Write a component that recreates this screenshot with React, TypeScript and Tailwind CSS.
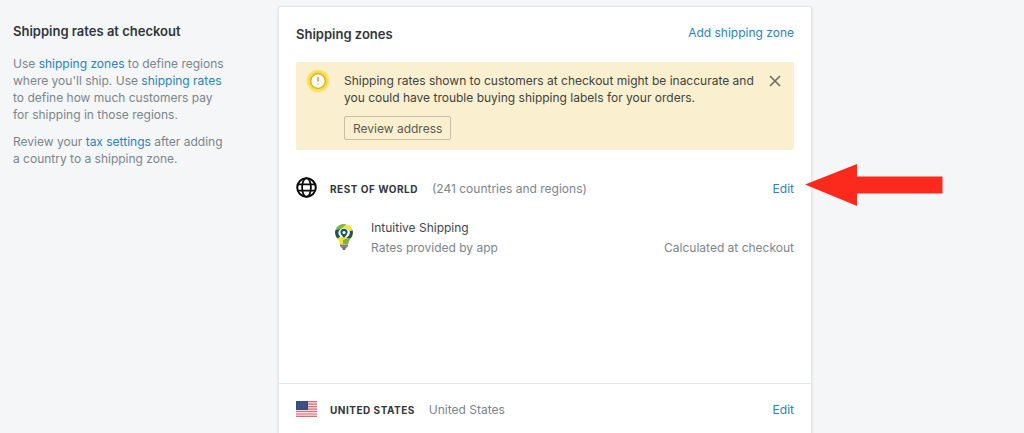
import type { ReactNode } from 'react'

const link = 'text-[#2a82bf] hover:underline'

function Globe() {
  return (
    <svg viewBox="0 0 22 22" className="w-[22px] h-[22px]" fill="none" stroke="#0b0b0b" strokeWidth="2" aria-hidden="true">
      <circle cx="10.500" cy="10.500" r="9.300" />
      <ellipse cx="10.500" cy="10.500" rx="4.400" ry="9.300" strokeWidth="1.800" />
      <path d="M2 7.300h17M2 13.700h17" strokeWidth="1.800" />
    </svg>
  )
}

function Flag() {
  return (
    <svg viewBox="0 0 21 16" className="w-[21px] h-4" aria-hidden="true">
      <rect width="21" height="16" fill="#f7dfe2" />
      <path d="M0 .7h21M0 3.2h21M0 5.6h21M0 8.1h21M0 10.5h21M0 13h21M0 15.4h21" stroke="#d0707b" strokeWidth="1.2" />
      <rect width="12" height="9" fill="#354a7d" />
      <path d="M2 2h9M2 4.500h9M2 7h9" stroke="#6f80ab" strokeWidth=".8" strokeDasharray=".8 1.600" />
    </svg>
  )
}

function Bulb() {
  return (
    <svg viewBox="0 0 18 26" className="w-[18px] h-[26px]" aria-hidden="true">
      <path d="M9 0C4 0 0 3.800 0 8.800c0 3.600 2.500 5.400 4 8.200l1 3h8l1-3c1.500-2.800 4-4.600 4-8.200C18 3.800 14 0 9 0z" fill="#f3e13c" />
      <path d="M9 0C4.800 0 1.500 2.600.4 6.200L5 6l6-5.700z" fill="#7eb24c" />
      <path d="M.4 6.200C-.4 9.500.5 12 2.600 14.600L5.600 12 4 8l1.500-3z" fill="#1d5260" />
      <path d="M17.700 6.500c.6 3-.2 5.500-2.300 8.100L11.500 14l2.500-3 1-4z" fill="#1d5260" />
      <path d="M8 16l5-2 2.400.6L14 17l-1 3H8z" fill="#7eb24c" />
      <ellipse cx="9" cy="9" rx="5.700" ry="4.700" fill="#fff" />
      <path d="M9 4.800c-2.200 0-3.600 1.500-3.600 3.300C5.400 10.500 9 14 9 14s3.600-3.500 3.600-5.900c0-1.800-1.400-3.300-3.600-3.300z" fill="#1d5260" />
      <circle cx="9" cy="8.500" r="1.600" fill="#fff" />
      <path d="M5 20.500h8v2l-2 1.500-1 2H8l-1-2-2-1.500z" fill="#77736f" />
      <path d="M5 22.300h8" stroke="#b5b0aa" strokeWidth=".6" />
    </svg>
  )
}

function Warning() {
  return (
    <svg viewBox="0 0 24 24" className="w-6 h-6" fill="none" aria-hidden="true">
      <circle cx="12" cy="12" r="11.500" fill="#fae57c" />
      <circle cx="12" cy="12" r="10" fill="#fbdc43" />
      <circle cx="12" cy="12" r="7.300" fill="#fffef6" stroke="#cfae2c" strokeWidth="1.300" />
      <path d="M12 8v4.500" stroke="#c3a934" strokeWidth="1.600" />
      <path d="M12 14.500v1.500" stroke="#d8c77c" strokeWidth="1.600" />
    </svg>
  )
}

function ZoneRow({ icon, name, detail, children }: { icon: ReactNode; name: string; detail: string; children?: ReactNode }) {
  return (
    <div className="relative flex items-center h-[22px]">
      <div className="w-[34px] shrink-0">{icon}</div>
      <h3 className="text-[10px] font-bold tracking-wider uppercase text-[#30363d] pt-[3px]">{name}</h3>
      <span className="ml-[14px] text-[#7b858e]">{detail}</span>
      <a href="#edit" aria-label={`Edit ${name}`} className={`ml-auto ${link}`}>Edit</a>
      {children}
    </div>
  )
}

export default function App() {
  return (
    <main className="min-h-screen grid grid-cols-[265fr_534fr_212fr] pl-[13px] pt-[6px] bg-[#f4f6f8] font-['Inter','Liberation_Sans',sans-serif] text-[12px] leading-[17px]">
      <section className="pt-4 pr-[50px] text-[#7b858e]">
        <h2 className="text-[13px] leading-[18px] font-semibold text-[#30363d]">Shipping rates at checkout</h2>
        <p className="mt-[15px]">
          Use <a href="#zones" className={link}>shipping zones</a> to define regions where you'll ship. Use{' '}
          <a href="#rates" className={link}>shipping rates</a> to define how much customers pay for shipping in those regions.
        </p>
        <p className="mt-[10px]">
          Review your <a href="#taxes" className={link}>tax settings</a> after adding a country to a shipping zone.
        </p>
      </section>

      <section className="flex flex-col bg-white border border-b-0 border-[#e4e8eb] rounded-t-[3px] shadow-sm">
        <div className="px-[17px] min-h-[376px]">
          <header className="flex items-start justify-between pt-[17px]">
            <h2 className="text-[13px] leading-[20px] font-semibold text-[#30363d]">Shipping zones</h2>
            <a href="#add" className={link}>Add shipping zone</a>
          </header>

          <div className="mt-[18px] flex items-start rounded-[2px] bg-[#faefce] pt-[7px] pb-[10px] pl-[10px] pr-3 text-[#41433f]">
            <Warning />
            <div className="ml-[14px] mt-[3px] flex-1">
              <p>Shipping rates shown to customers at checkout might be inaccurate and you could have trouble buying shipping labels for your orders.</p>
              <button type="button" className="mt-[10px] h-6 px-2 border border-[#c4bea8] rounded-[2px] text-[#5c5b52]">Review address</button>
            </div>
            <button type="button" aria-label="Dismiss" className="mt-[5px] ml-2">
              <svg viewBox="0 0 14 14" className="w-[14px] h-[14px]" stroke="#6b6c66" strokeWidth="1.600">
                <path d="M2 2l10 10M12 2L2 12" />
              </svg>
            </button>
          </div>

          <div className="mt-[27px]">
            <ZoneRow icon={<Globe />} name="Rest of world" detail="(241 countries and regions)">
              <svg viewBox="0 0 138 42" className="absolute left-full -top-[13px] ml-[11px] w-[138px] h-[42px]" aria-hidden="true">
                <path d="M0 20.500L52 0v12.500h85.500v17H52V42z" fill="#fc2a1c" />
              </svg>
            </ZoneRow>
          </div>

          <div className="mt-5 pl-[39px] flex">
            <div className="mt-[5px] w-9"><Bulb /></div>
            <div className="flex-1">
              <p className="text-[#41474e]">Intuitive Shipping</p>
              <div className="mt-[3px] flex justify-between text-[#7b858e]">
                <span>Rates provided by app</span>
                <span>Calculated at checkout</span>
              </div>
            </div>
          </div>
        </div>

        <div className="px-[17px] pt-[14px] border-t border-[#e4e8eb]">
          <ZoneRow icon={<Flag />} name="United States" detail="United States" />
        </div>
      </section>
    </main>
  )
}
